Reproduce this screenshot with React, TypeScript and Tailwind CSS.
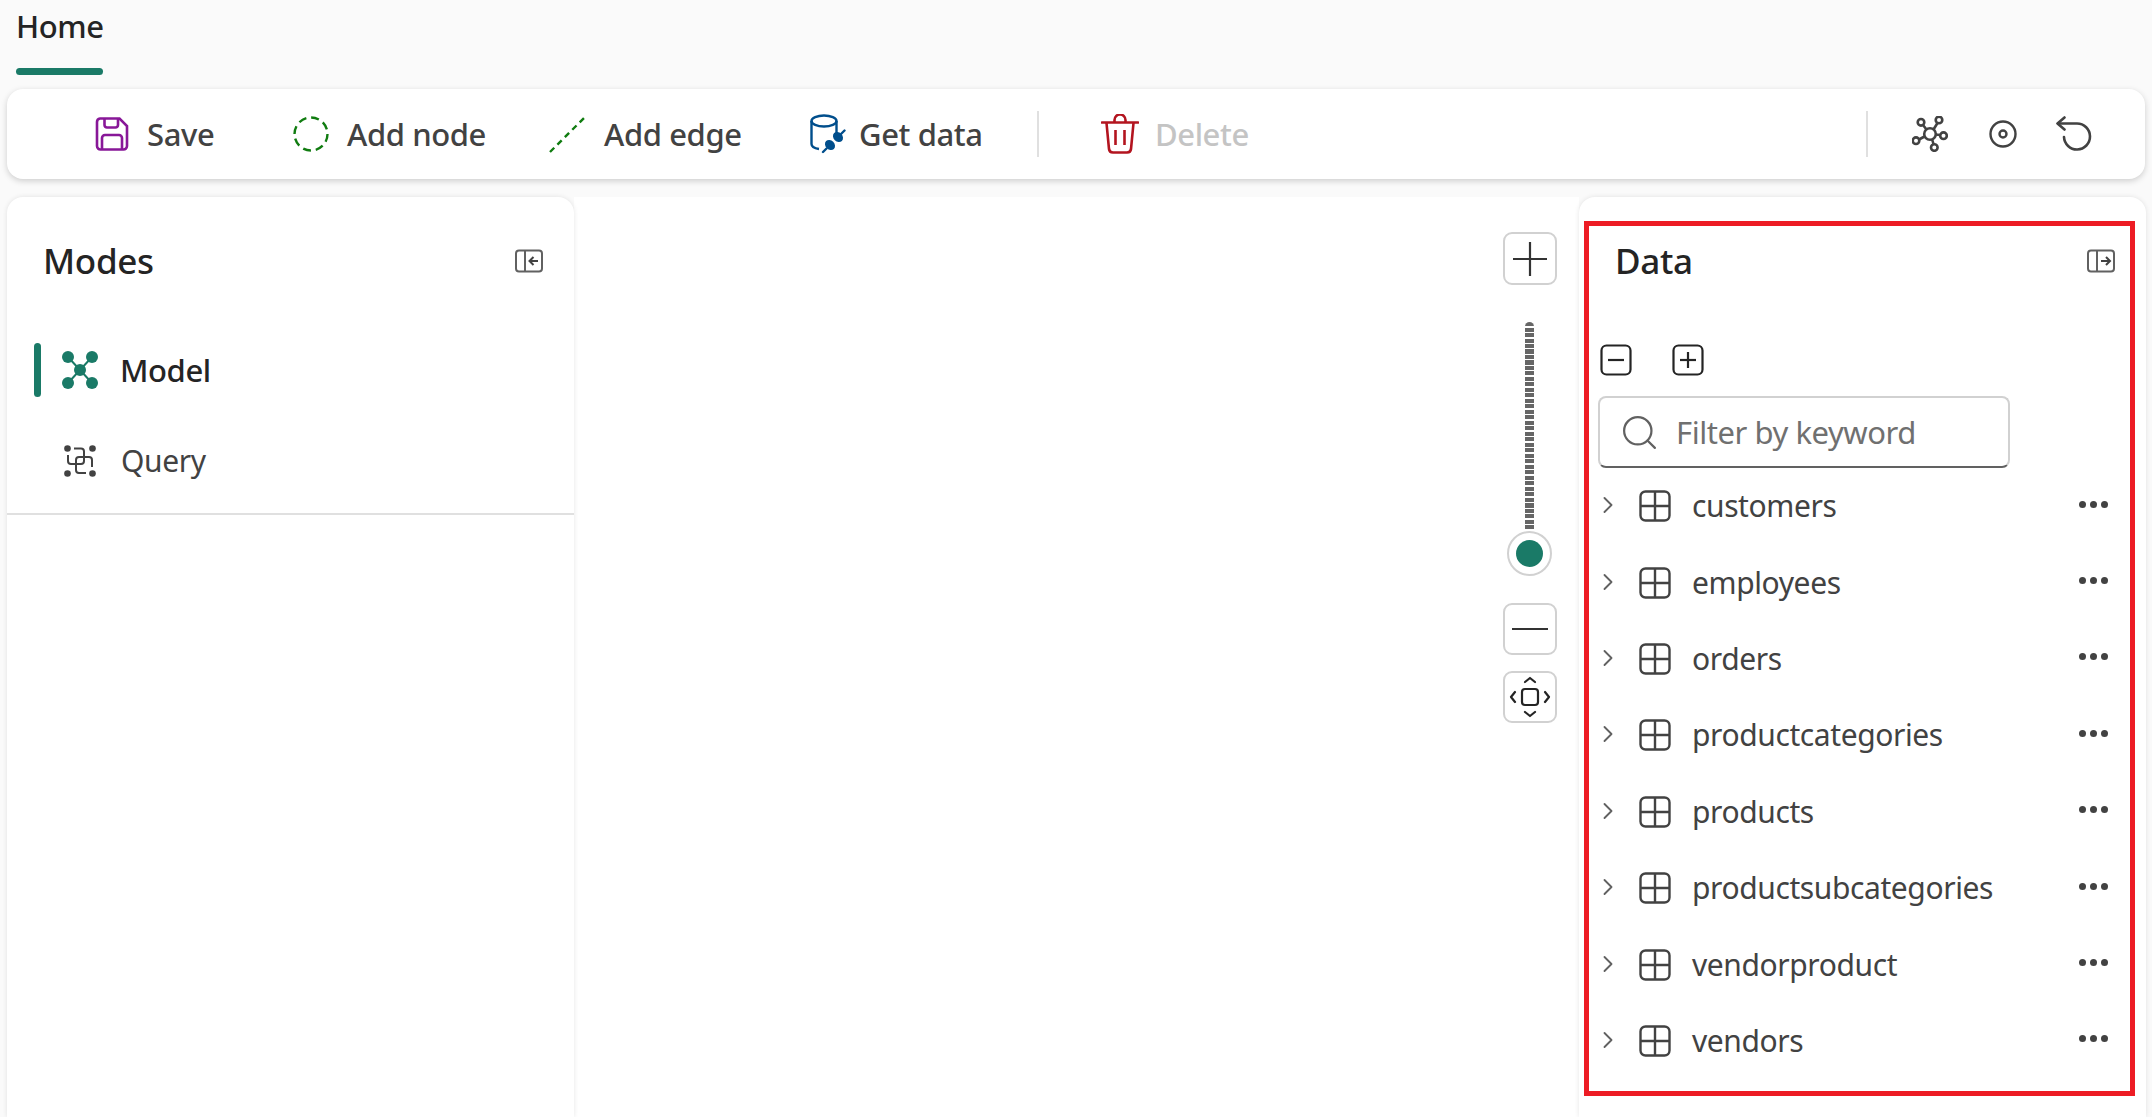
import React from 'react';
import { ChevronRight, Search } from 'lucide-react';

const tables = [
  'customers',
  'employees',
  'orders',
  'productcategories',
  'products',
  'productsubcategories',
  'vendorproduct',
  'vendors',
];

function SaveIcon() {
  return (
    <svg viewBox="0 0 34 34" className="w-[34px] h-[34px]" fill="none" stroke="#881798" strokeWidth="2.6">
      <path d="M5 1.5h19.5L32 9v20a3.5 3.5 0 0 1-3.5 3.5h-23A3.5 3.5 0 0 1 2 29V5a3.5 3.5 0 0 1 3-3.5z" />
      <path d="M9.5 2v6a2.5 2.5 0 0 0 2.5 2.5h8.5A2.5 2.5 0 0 0 23 8V2" />
      <path d="M7 32V21a3 3 0 0 1 3-3h14a3 3 0 0 1 3 3v11" />
    </svg>
  );
}

function NodeIcon() {
  return (
    <svg viewBox="0 0 36 36" className="w-[36px] h-[36px]" fill="none">
      <circle cx="18" cy="18" r="16.5" stroke="#107c10" strokeWidth="2.4" strokeDasharray="8 4.9" />
    </svg>
  );
}

function EdgeIcon() {
  return (
    <svg viewBox="0 0 38 38" className="w-[38px] h-[38px]" fill="none">
      <path d="M1 37L37 1" stroke="#107c10" strokeWidth="2.4" strokeDasharray="6 4.5" />
    </svg>
  );
}

function GetDataIcon() {
  return (
    <svg viewBox="0 0 36 40" className="w-[36px] h-[40px]" fill="none" stroke="#004e8c" strokeWidth="2.4">
      <ellipse cx="14" cy="7" rx="12.5" ry="5.5" />
      <path d="M1.500 7v23c0 2.600 3.200 4.300 7.500 5" />
      <path d="M26.500 7v13" />
      <ellipse cx="20" cy="31" rx="4.500" ry="5.500" transform="rotate(-45 20 31)" fill="#004e8c" stroke="none" />
      <ellipse cx="28" cy="23" rx="4.500" ry="5.500" transform="rotate(-45 28 23)" fill="#004e8c" stroke="none" />
      <path d="M16.500 34.500L13 38M31 20l3.500-3.500" strokeLinecap="round" />
    </svg>
  );
}

function TrashIcon() {
  return (
    <svg viewBox="0 0 38 40" className="w-[38px] h-[40px]" fill="none" stroke="#b3141f" strokeWidth="2.6">
      <path d="M1 8.500h36" strokeLinecap="round" />
      <path d="M13.500 8V6a5.500 5.500 0 0 1 11 0v2" />
      <path d="M5.500 9l2.500 26a4 4 0 0 0 4 3.500h14a4 4 0 0 0 4-3.500L32.500 9" />
      <path d="M14.500 16v15M23.500 16v15" />
    </svg>
  );
}

function NetworkIcon() {
  return (
    <svg viewBox="0 0 36 36" className="w-[36px] h-[36px]" fill="none" stroke="#424242" strokeWidth="2.600">
      <circle cx="18" cy="18" r="5.800" />
      <circle cx="9" cy="6.300" r="3.300" />
      <circle cx="27" cy="4" r="3.300" />
      <circle cx="4" cy="24.700" r="3.300" />
      <circle cx="31.500" cy="19.700" r="3.300" />
      <circle cx="22.300" cy="31.500" r="3.300" />
      <path d="M11 9l3.500 4.500M25.500 7L21.500 13.500M7 23.500l5.500-3M28 19l-4.500-.5M21.500 28l-1.500-5" />
    </svg>
  );
}

function TargetIcon() {
  return (
    <svg viewBox="0 0 28 28" className="w-[28px] h-[28px]" fill="none" stroke="#424242" strokeWidth="2.400">
      <circle cx="14" cy="14" r="12.500" />
      <circle cx="14" cy="14" r="3.500" />
    </svg>
  );
}

function UndoIcon() {
  return (
    <svg viewBox="0 0 36 36" className="w-[36px] h-[36px]" fill="none" stroke="#424242" strokeWidth="2.600">
      <path d="M8.500 1.500L1.500 7.500l7 6" strokeLinecap="round" strokeLinejoin="round" />
      <path d="M2 7.500h19a13 13 0 1 1-13 13.500" strokeLinecap="round" />
    </svg>
  );
}

function ModelIcon() {
  return (
    <svg viewBox="0 0 36 38" className="w-[36px] h-[38px]" fill="#1a7a67" stroke="#1a7a67">
      <path d="M6 6l24 26M30 6L6 32" strokeWidth="2" />
      <circle cx="6" cy="6" r="6" stroke="none" />
      <circle cx="30" cy="6" r="6" stroke="none" />
      <circle cx="6" cy="32" r="6" stroke="none" />
      <circle cx="30" cy="32" r="6" stroke="none" />
      <circle cx="18" cy="19" r="6" stroke="none" />
    </svg>
  );
}

function QueryIcon() {
  return (
    <svg viewBox="0 0 32 32" className="w-[32px] h-[32px]" fill="none" stroke="#424242" strokeWidth="2">
      <circle cx="3.500" cy="3.500" r="3.300" fill="#424242" stroke="none" />
      <circle cx="28.500" cy="3.500" r="3.300" fill="#424242" stroke="none" />
      <circle cx="3.500" cy="28.500" r="3.300" fill="#424242" stroke="none" />
      <circle cx="28.500" cy="28.500" r="3.300" fill="#424242" stroke="none" />
      <path d="M10 3.500h7a3 3 0 0 1 3 3V16a3 3 0 0 1-3 3H7a3 3 0 0 1-3-3V10" />
      <path d="M28 22V15a3 3 0 0 0-3-3H15a3 3 0 0 0-3 3v10a3 3 0 0 0 3 3h7" />
    </svg>
  );
}

function PaneIcon({ direction }: { direction: 'in' | 'out' }) {
  return (
    <svg viewBox="0 0 28 24" className="w-[28px] h-[24px]" fill="none" stroke="#616161" strokeWidth="2">
      <rect x="1" y="1.500" width="26" height="21" rx="3" />
      {direction === 'in' ? (
        <>
          <path d="M10 2v20" />
          <path d="M23 12h-8M18.500 8l-4 4 4 4" stroke="#424242" />
        </>
      ) : (
        <>
          <path d="M10 2v20" />
          <path d="M14 12h9M19 8l4 4-4 4" stroke="#424242" />
        </>
      )}
    </svg>
  );
}

function BoxIcon({ plus }: { plus?: boolean }) {
  return (
    <svg viewBox="0 0 32 32" className="w-[32px] h-[32px]" fill="none" stroke="#242424" strokeWidth="2.200">
      <rect x="1.500" y="1.500" width="29" height="29" rx="5" />
      <path d="M8 16h16" />
      {plus && <path d="M16 8v16" />}
    </svg>
  );
}

function TableIcon() {
  return (
    <svg viewBox="0 0 32 32" className="w-[32px] h-[32px]" fill="none" stroke="#424242" strokeWidth="2.400">
      <rect x="1.500" y="1.500" width="29" height="29" rx="5" />
      <path d="M16 2v28M2 16h28" />
    </svg>
  );
}

function FitIcon() {
  return (
    <svg viewBox="0 0 44 44" className="w-[44px] h-[44px]" fill="none" stroke="#242424" strokeWidth="2.200" strokeLinecap="round" strokeLinejoin="round">
      <rect x="14" y="14" width="16" height="16" rx="3" />
      <path d="M17 7l5-4 5 4M17 37l5 4 5-4M7 17l-4 5 4 5M37 17l4 5-4 5" />
    </svg>
  );
}

function ZoomButton({ children, className }: { children: React.ReactNode; className: string }) {
  return (
    <div className={`w-[54px] flex items-center justify-center rounded-[9px] border-2 border-[#d1d1d1] bg-white ${className}`}>
      {children}
    </div>
  );
}

function ToolbarButton({
  icon,
  label,
  className,
  textClass = 'text-[#424242]',
}: {
  icon: React.ReactNode;
  label: string;
  className: string;
  textClass?: string;
}) {
  return (
    <div className={`flex items-center ${className}`}>
      {icon}
      <span className={`text-[31px] leading-none font-medium tracking-[-0.4px] ${textClass}`}>{label}</span>
    </div>
  );
}

export default function App() {
  return (
    <div className="h-[1117px] w-[2152px] overflow-hidden bg-[#fafafa] flex flex-col font-['Noto_Sans',sans-serif]">
      {/* tab strip */}
      <div className="h-[89px] pl-4 shrink-0">
        <div className="w-[87px] flex flex-col">
          <span className="h-[68px] pt-[8px] text-[31px] leading-[36px] font-medium text-[#242424] tracking-[-0.4px] whitespace-nowrap">Home</span>
          <div className="h-[7px] rounded-full bg-[#1a7a67]" />
        </div>
      </div>

      {/* toolbar */}
      <div className="mx-[7px] h-[90px] shrink-0 rounded-[16px] bg-white shadow-[0_2px_6px_rgba(0,0,0,0.18)] flex items-center pl-[88px] pr-[53px]">
        <ToolbarButton icon={<SaveIcon />} label="Save" className="gap-[18px] w-[198px]" />
        <ToolbarButton icon={<NodeIcon />} label="Add node" className="gap-[18px] w-[256px]" />
        <ToolbarButton icon={<EdgeIcon />} label="Add edge" className="gap-[17px] w-[261px]" />
        <ToolbarButton icon={<GetDataIcon />} label="Get data" className="gap-[13px] w-[227px]" />
        <div className="w-[2px] h-[46px] bg-[#e0e0e0]" />
        <ToolbarButton icon={<TrashIcon />} label="Delete" className="gap-[16px] ml-[62px]" textClass="text-[#c4c4c4]" />
        <div className="flex-1" />
        <div className="w-[2px] h-[46px] bg-[#e0e0e0] mr-[44px]" />
        <div className="flex items-center">
          <NetworkIcon />
          <div className="ml-[41px] mr-[39px]">
            <TargetIcon />
          </div>
          <UndoIcon />
        </div>
      </div>

      {/* body */}
      <div className="flex-1 min-h-0 mt-[18px] mx-[6px] flex">
        {/* modes */}
        <div className="w-[567px] ml-px shrink-0 rounded-t-[16px] bg-white shadow-[0_0_5px_rgba(0,0,0,0.1)] z-10">
          <div className="flex flex-col h-[318px] border-b-2 border-[#e0e0e0]">
            <div className="flex items-center justify-between pl-[36px] pr-[31px] pt-[45px]">
              <span className="text-[35px] leading-[38px] font-medium text-[#242424] tracking-[-0.3px]">Modes</span>
              <PaneIcon direction="in" />
            </div>
            <div className="mt-[63px] ml-[27px] h-[54px] flex items-center">
              <div className="w-[7px] h-[54px] rounded-full bg-[#1a7a67]" />
              <div className="ml-[21px]">
                <ModelIcon />
              </div>
              <span className="ml-[22px] text-[31px] leading-none font-medium text-[#242424] tracking-[-0.4px]">Model</span>
            </div>
            <div className="mt-[48px] ml-[57px] flex items-center">
              <QueryIcon />
              <span className="ml-[25px] text-[30px] leading-none text-[#424242] tracking-[-0.4px]">Query</span>
            </div>
          </div>
        </div>

        {/* canvas */}
        <div className="flex-1 bg-white flex flex-col items-end pr-[22px] pt-[35px]">
          <div className="w-[54px] flex flex-col items-center">
            <ZoomButton className="h-[53px]">
              <svg viewBox="0 0 36 36" className="w-[36px] h-[36px]" stroke="#333" strokeWidth="2.200">
                <path d="M18 1v34M1 18h34" />
              </svg>
            </ZoomButton>
            <div className="mt-[37px] w-[9px] h-[209px] -translate-x-px rounded-t-full bg-[repeating-linear-gradient(to_bottom,#666_0,#666_4px,#fff_4px,#fff_5.5px)]" />
            <div className="w-[45px] h-[45px] -translate-x-px rounded-full border-2 border-[#d1d1d1] bg-white flex items-center justify-center">
              <div className="w-[27px] h-[27px] rounded-full bg-[#1a7a67]" />
            </div>
            <ZoomButton className="h-[52px] mt-[27px]">
              <div className="w-[36px] h-[2px] bg-[#333]" />
            </ZoomButton>
            <ZoomButton className="h-[52px] mt-[16px]">
              <FitIcon />
            </ZoomButton>
          </div>
        </div>

        {/* data */}
        <div className="w-[567px] shrink-0 rounded-t-[16px] bg-white shadow-[0_0_5px_rgba(0,0,0,0.1)] z-10 pt-6 pl-[5px] pr-[11px]">
          <div className="h-[875px] border-[5px] border-[#ed1c24] flex flex-col">
            <div className="flex items-center justify-between pl-[26px] pr-[15px] pt-[16px]">
              <span className="text-[35px] leading-[38px] font-medium text-[#242424] tracking-[-0.3px]">Data</span>
              <PaneIcon direction="out" />
            </div>
            <div className="mt-[64px] ml-[11px] flex gap-[40px]">
              <BoxIcon />
              <BoxIcon plus />
            </div>
            <div className="mt-[20px] ml-[9px] w-[412px] h-[72px] rounded-[8px] border-2 border-[#d1d1d1] border-b-[#616161] flex items-center pl-[19px]">
              <Search size={41} strokeWidth={1.3} color="#616161" />
              <span className="ml-[16px] text-[31px] leading-none text-[#707070] tracking-[-0.45px]">Filter by keyword</span>
            </div>
            <div className="flex flex-col">
              {tables.map((name) => (
                <div key={name} className="h-[76.4px] flex items-center pl-[7px] pr-[22px]">
                  <ChevronRight size={28} strokeWidth={1.6} color="#616161" className="-ml-[2px] -mt-[2px]" />
                  <div className="ml-[17px]">
                    <TableIcon />
                  </div>
                  <span className="ml-[21px] flex-1 text-[30px] leading-none text-[#424242] tracking-[-0.4px]">{name}</span>
                  <div className="flex gap-[4px] -mt-[4px]">
                    <div className="w-[7px] h-[7px] rounded-full bg-[#424242]" />
                    <div className="w-[7px] h-[7px] rounded-full bg-[#424242]" />
                    <div className="w-[7px] h-[7px] rounded-full bg-[#424242]" />
                  </div>
                </div>
              ))}
            </div>
          </div>
        </div>
      </div>
    </div>
  );
}
